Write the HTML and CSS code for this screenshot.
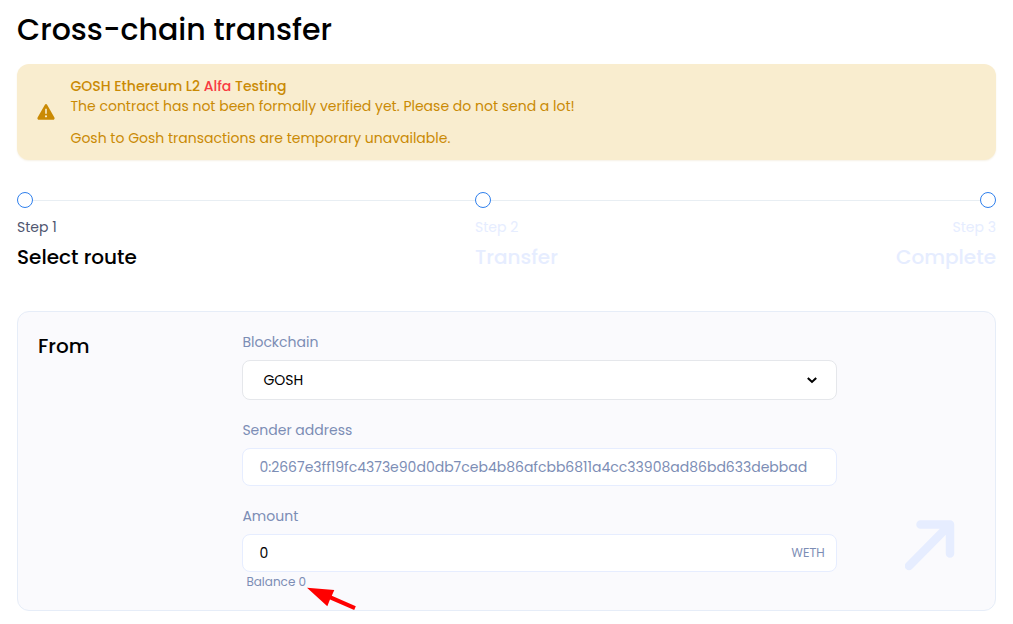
FILE: index.html
```html
<!DOCTYPE html>
<html lang="en">
<head>
<meta charset="utf-8">
<title>Cross-chain transfer</title>
<link rel="stylesheet" href="styles.css">
</head>
<body>
<main class="page">
  <h1 class="title">Cross-chain transfer</h1>

  <section class="alert">
    <svg class="alert-icon" viewBox="0 0 18 16" width="18" height="16"><path fill="#ca8a04" fill-rule="evenodd" d="M7.9.7a1.3 1.3 0 0 1 2.2 0l7.3 12.7c.6 1-.1 2.3-1.2 2.3H1.800c-1.100 0-1.800-1.300-1.200-2.300zM8.200 4.700v5h1.600v-5zM9 11.200a1.100 1.100 0 1 0 0 2.200 1.100 1.100 0 0 0 0-2.200z"/></svg>
    <div class="alert-text">
      <p class="alert-head">GOSH Ethereum L2 <em>Alfa</em> Testing</p>
      <p>The contract has not been formally verified yet. Please do not send a lot!</p>
      <p class="alert-note">Gosh to Gosh transactions are temporary unavailable.</p>
    </div>
  </section>

  <ol class="steps">
    <li class="step step-active">
      <div class="track"><i class="dot"></i><i class="line"></i></div>
      <p class="step-no">Step 1</p>
      <p class="step-name">Select route</p>
    </li>
    <li class="step step-mid">
      <div class="track"><i class="dot"></i><i class="line"></i></div>
      <p class="step-no">Step 2</p>
      <p class="step-name">Transfer</p>
    </li>
    <li class="step step-last">
      <div class="track"><i class="line"></i><i class="dot"></i></div>
      <p class="step-no">Step 3</p>
      <p class="step-name">Complete</p>
    </li>
  </ol>

  <section class="panel">
    <h2 class="panel-title">From</h2>
    <div class="fields">
      <div class="field">
        <label class="label">Blockchain</label>
        <div class="box select"><span>GOSH</span>
          <svg viewBox="0 0 10 8" width="10" height="8"><path d="M.8 2L5 5.900 9.200 2" fill="none" stroke="#000" stroke-width="2.100"/></svg>
        </div>
      </div>
      <div class="field">
        <label class="label">Sender address</label>
        <div class="box"><span>0:2667e3ff19fc4373e90d0db7ceb4b86afcbb6811a4cc33908ad86bd633debbad</span></div>
      </div>
      <div class="field">
        <label class="label">Amount</label>
        <div class="box"><span class="amount">0</span><span class="unit">WETH</span></div>
        <p class="balance">Balance 0</p>
      </div>
    </div>
    <svg class="direction" viewBox="0 0 50 51" width="50" height="51"><path d="M15.500 4.500H45V33.500M45 4.500L4 46" fill="none" stroke="#e6edff" stroke-width="8.500" stroke-linecap="round" stroke-linejoin="round"/></svg>
  </section>
</main>
<svg class="pointer" viewBox="0 0 50 24" width="50" height="24"><path fill="#f00" d="M0 .8L27.300 3 24.800 8.700 48.800 19.300 47.200 23 23 12.600 20.300 19.300z"/></svg>
</body>
</html>
```
FILE: styles.css
```css
* { box-sizing: border-box; margin: 0; padding: 0; }
body {
  width: 1013px; height: 624px; overflow: hidden; background: #fff; color: #000;
  font-family: Poppins, Inter, "Liberation Sans", sans-serif;
  font-size: 14px; line-height: 20px; position: relative; white-space: nowrap;
}
svg { display: block; flex: none; }
.page { padding: 12px 17px 0; }
.title { font-size: 30px; line-height: 36px; font-weight: 500; }
.alert {
  margin-top: 16px; height: 96px; border-radius: 12px; background: #f9edcf; color: #ca8a04;
  display: flex; align-items: center; padding-left: 19.500px; gap: 16px;
  box-shadow: 0 1px 2px #f6f1e6;
}
.alert-head { font-weight: 500; }
.alert-head em { font-style: normal; color: #f83a42; }
.alert-note { margin-top: 12px; }
.steps { list-style: none; display: flex; margin-top: 32px; }
.step { flex: none; }
.step-active { width: 458px; }
.step-mid { width: 421px; }
.step-last { flex: 1; text-align: right; }
.track { display: flex; align-items: center; height: 16px; }
.dot { width: 16px; height: 16px; border: 1px solid #2f80ed; border-radius: 50%; flex: none; }
.line { flex: 1; height: 1px; background: #e8eef3; }
.step-no { margin-top: 9px; color: #e6edff; }
.step-active .step-no { color: #4f5570; }
.step-name { margin-top: 6px; font-size: 20px; line-height: 28px; font-weight: 500; color: #e6edff; }
.step-active .step-name { color: #000; }
.panel {
  margin-top: 40px; height: 300px; border: 1px solid #e6edf8; border-radius: 12px;
  background: #fafafd; display: flex; padding: 20px;
}
.panel-title { width: 204px; flex: none; font-size: 20px; line-height: 28px; font-weight: 500; }
.fields { width: 595px; flex: none; }
.field { margin-bottom: 20px; }
.label { display: block; color: #7c8db5; margin-bottom: 8px; padding-left: .4px; }
.box {
  height: 38px; border: 1px solid #e6edff; border-radius: 8px; background: #fff;
  display: flex; align-items: center; justify-content: space-between; padding: 0 11px 0 16.400px; color: #7c8db5;
}
.select { height: 40px; padding: 0 19px 0 20.400px; color: #000; border-color: #e5e7eb; }
.amount { color: #000; }
.unit { font-family: "Noto Sans", sans-serif; font-size: 12px; }
.balance { color: #7c8db5; font-size: 12px; padding-left: 4.400px; }
.direction { align-self: flex-end; margin: 0 0 19px 68px; }
.pointer { position: absolute; left: 307px; top: 587px; }
```
